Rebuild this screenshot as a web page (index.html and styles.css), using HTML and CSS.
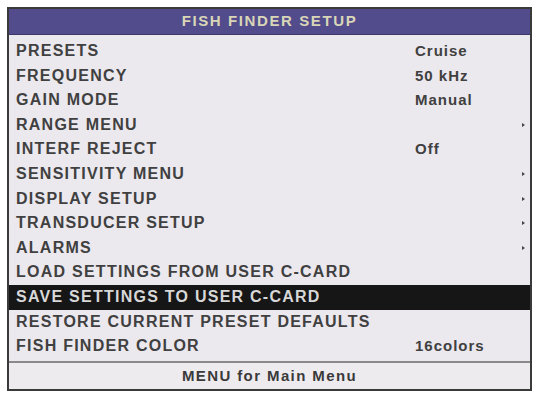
FILE: index.html
```html
<!DOCTYPE html>
<html>
<head>
<meta charset="utf-8">
<link rel="stylesheet" href="styles.css">
</head>
<body>
<div class="frame">
  <div class="title">FISH FINDER SETUP</div>
  <div class="list">
    <div class="row"><span class="label">PRESETS</span><span class="value">Cruise</span></div>
    <div class="row"><span class="label">FREQUENCY</span><span class="value">50 kHz</span></div>
    <div class="row"><span class="label">GAIN MODE</span><span class="value">Manual</span></div>
    <div class="row"><span class="label">RANGE MENU</span><span class="value"></span><span class="arrow"></span></div>
    <div class="row"><span class="label">INTERF REJECT</span><span class="value">Off</span></div>
    <div class="row"><span class="label">SENSITIVITY MENU</span><span class="value"></span><span class="arrow"></span></div>
    <div class="row"><span class="label">DISPLAY SETUP</span><span class="value"></span><span class="arrow"></span></div>
    <div class="row"><span class="label">TRANSDUCER SETUP</span><span class="value"></span><span class="arrow"></span></div>
    <div class="row"><span class="label">ALARMS</span><span class="value"></span><span class="arrow"></span></div>
    <div class="row"><span class="label">LOAD SETTINGS FROM USER C-CARD</span></div>
    <div class="row selected"><span class="label">SAVE SETTINGS TO USER C-CARD</span></div>
    <div class="row"><span class="label">RESTORE CURRENT PRESET DEFAULTS</span></div>
    <div class="row"><span class="label">FISH FINDER COLOR</span><span class="value">16colors</span></div>
  </div>
  <div class="footer">MENU for Main Menu</div>
</div>
</body>
</html>
```
FILE: styles.css
```css
html, body {
  margin: 0;
  padding: 0;
  background: #ffffff;
}
body {
  width: 535px;
  height: 393px;
  overflow: hidden;
  font-family: "Liberation Sans", Arial, sans-serif;
}
.frame {
  margin: 7px 0 0 7px;
  width: 521px;
  height: 380px;
  border: 2px solid #3a3a3a;
  background: #ebe8ee;
  display: flex;
  flex-direction: column;
}
.title {
  height: 25px;
  background: #524c8c;
  color: #d9d6b8;
  font-weight: bold;
  font-size: 15px;
  line-height: 24px;
  text-align: center;
  letter-spacing: 1.6px;
  border-bottom: 1px solid #3b3766;
}
.list {
  padding-top: 4px;
  flex: 1;
  display: flex;
  flex-direction: column;
}
.row {
  height: 24.6px;
  line-height: 24px;
  display: grid;
  grid-template-columns: 406px 1fr 8px;
  align-items: baseline;
  color: #404040;
  font-size: 16px;
  font-weight: bold;
  letter-spacing: 1.25px;
  white-space: nowrap;
}
.label {
  padding-left: 7px;
}
.value {
  font-size: 15px;
  letter-spacing: 1px;
}
.arrow {
  align-self: center;
  width: 0;
  height: 0;
  border-left: 3px solid #444;
  border-top: 2px solid transparent;
  border-bottom: 2px solid transparent;
}
.selected {
  background: #161616;
  color: #d8d8d8;
}
.footer {
  height: 26px;
  border-top: 2px solid #8a8a8a;
  background: #eeebef;
  color: #3a3a3a;
  font-size: 15px;
  font-weight: bold;
  text-align: center;
  line-height: 26px;
  letter-spacing: 1.4px;
}
```
